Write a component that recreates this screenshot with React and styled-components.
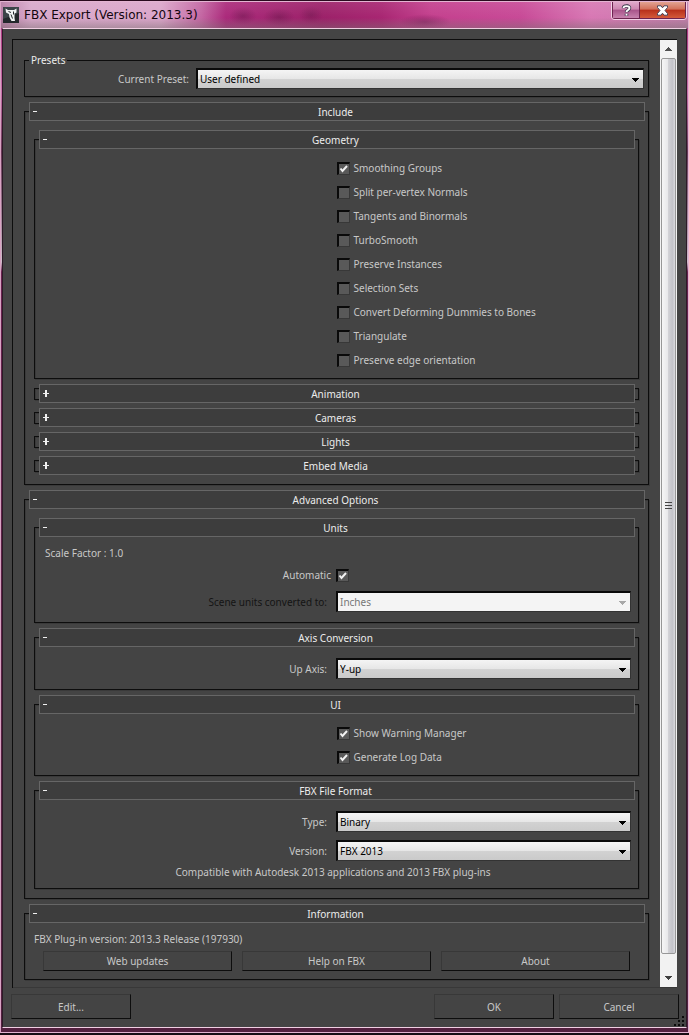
import React, { useState } from 'react';
import styled, { createGlobalStyle, css } from 'styled-components';

const GlobalStyle = createGlobalStyle`
  * { box-sizing: border-box; }
  body {
    margin: 0;
    background: #1a0c16;
    font-family: 'Noto Sans', 'Open Sans', sans-serif;
    font-size: 10px;
    line-height: 14px;
    color: #c8c8c8;
  }
  button, select, input { font: inherit; margin: 0; }
`;

const Window = styled.div`
  min-height: 100vh;
  display: flex;
  flex-direction: column;
  border-top: 1px solid #2a0a1e;
  border-bottom: 2px solid #160d14;
`;

const Frame = styled.div`
  flex: 1;
  display: flex;
  flex-direction: column;
  padding: 0 0 4px;
  border: 1px solid #e3b4d2;
  border-left-color: #d9a3c4;
  background: linear-gradient(180deg, #a0246f 0, #c66fa8 90px, #6a3a58 150px, #cdbcc8 260px, #6b2350 270px, #5a2245 60%, #53203f 100%);
`;

const TitleBar = styled.header`
  height: 26px;
  display: flex;
  align-items: flex-start;
  padding-left: 2px;
  background:
    linear-gradient(180deg, rgba(255, 255, 255, 0.08) 0, rgba(0, 0, 0, 0) 60%, rgba(120, 110, 110, 0.45) 100%),
    radial-gradient(ellipse 14px 9px at 242px 14px, rgba(90, 20, 65, 0.4), transparent),
    radial-gradient(ellipse 16px 9px at 278px 15px, rgba(90, 20, 65, 0.4), transparent),
    radial-gradient(ellipse 12px 9px at 310px 13px, rgba(90, 20, 65, 0.35), transparent),
    radial-gradient(ellipse 26px 8px at 424px 20px, rgba(110, 25, 80, 0.5), transparent),
    linear-gradient(90deg, #b77da4 0, #d9a9cb 30px, #dba6ca 160px, #c467a3 200px, #ab2a7b 225px, #9c2169 320px, #a82672 380px, #c4408e 430px, #c84a97 520px, #d878b4 590px, #c27fab 100%);
`;

const AppIcon = styled.svg`
  width: 16px;
  height: 16px;
  margin-top: 5px;
  flex: none;
`;

const Title = styled.h1`
  flex: 1;
  margin: 0;
  padding-left: 5px;
  font: 12px/27px 'DejaVu Sans', sans-serif;
  color: #12060e;
  white-space: nowrap;
`;

const CaptionButtons = styled.div`
  display: flex;
  height: 18px;
  margin-right: 1px;
  border: 1px solid #f2d3e6;
  border-top: 0;
  border-radius: 0 0 4px 4px;
  overflow: hidden;
`;

const closeFill = 'linear-gradient(180deg, #e2a392 0, #d2705a 45%, #b8301a 50%, #d45a3a 100%)';
const helpFill = 'linear-gradient(180deg, #e0a9cb 0, #cd86b1 45%, #a8548a 50%, #c883ae 100%)';

const CaptionButton = styled.button`
  display: flex;
  align-items: center;
  justify-content: center;
  width: ${(p) => (p.$close ? 47 : 27)}px;
  padding: 0;
  border: 1px solid #6d2450;
  border-top: 0;
  border-right-width: ${(p) => (p.$close ? 1 : 0)}px;
  background: ${(p) => (p.$close ? closeFill : helpFill)};
`;

const Client = styled.main`
  flex: 1;
  display: flex;
  flex-direction: column;
  margin: 0 1px;
  padding: 10px 7px 8px 9px;
  border: 1px solid #f0cfe2;
  border-left-color: #2d1a28;
  border-right-color: #2d1a28;
  background: #444;
`;

const ScrollArea = styled.div`
  flex: 1;
  display: flex;
  border: solid #0d0d0d;
  border-width: 1px 0 0 1px;
  box-shadow: inset 0 -1px 0 #383838;
  margin-right: 2px;
`;

const Content = styled.div`
  flex: 1;
  min-width: 0;
  display: flex;
  flex-direction: column;
  padding: 13px 11px 8px;
`;

const PresetGroup = styled.fieldset`
  min-width: 0;
  margin: 0;
  padding: 1px 4px 7px 0;
  border: 1px solid #0d0d0d;
  box-shadow: 1px 1px 0 #3a3a3a;
`;

const Legend = styled.legend`
  margin-left: 4px;
  padding: 0 2px;
  color: #ececec;
`;

const PresetRow = styled.div`
  display: grid;
  grid-template-columns: 164px 1fr;
  gap: 7px;
  align-items: center;
`;

const SectionBox = styled.section`
  border: 1px solid #0d0d0d;
  box-shadow: 1px 1px 0 #3a3a3a, inset 1px 1px 0 #3a3a3a;
  margin-top: ${(p) => (p.$top ? 14 : 0)}px;

  section + & {
    margin-top: 14px;
  }

  ${(p) => p.$collapsed && css`
    height: 12px;
    margin-bottom: 3px;

    section + & {
      margin-top: 9px;
    }
  `}
`;

const SectionHeader = styled.button`
  display: grid;
  grid-template-columns: 12px 1fr 18px;
  align-items: center;
  width: calc(100% - 7px);
  height: 19px;
  margin: ${(p) => (p.$collapsed ? -5 : -10)}px 3px 0 4px;
  padding: 0 0 0 3px;
  border: 1px solid #666;
  background: #3d3d3d;
  color: #ececec;
  text-align: center;
`;

const Sign = styled.svg`
  width: 6px;
  height: 7px;
  fill: #f0f0f0;
`;

const Nested = styled.div`
  display: flex;
  flex-direction: column;
  padding: 18px 9px 9px;
`;

const Options = styled.div`
  display: flex;
  flex-direction: column;
  padding: 7px 0 6px;
`;

const OptionLabel = styled.label`
  display: flex;
  align-items: center;
  gap: 4px;
  height: 24px;
  padding-left: 50%;
`;

const TickBox = styled.span`
  position: relative;
  width: 13px;
  height: 13px;
  flex: none;
`;

const TickInput = styled.input`
  display: block;
  appearance: none;
  width: 13px;
  height: 13px;
  border: solid #383838;
  border-width: 2px 1px 1px 2px;
  border-top-color: #0a0a0a;
  border-left-color: #0a0a0a;
  background: #595959;
`;

const TickMark = styled.svg`
  position: absolute;
  inset: 0;
  pointer-events: none;
`;

const Form = styled.div`
  display: flex;
  flex-direction: column;
  padding: ${(p) => (p.$lead ? 9 : 11)}px 7px ${(p) => (p.$tail ? 9 : 10)}px 0;
`;

const Field = styled.div`
  display: grid;
  grid-template-columns: calc(50% - 6px) 1fr;
  column-gap: 9px;
  align-items: center;
  margin-top: ${(p) => p.$gap || 0}px;
`;

const FieldLabel = styled.label`
  text-align: right;
  color: ${(p) => (p.$disabled ? '#141414' : '#c8c8c8')};
`;

const Note = styled.p`
  margin: 0;
  padding: ${(p) => (p.$center ? '4px 0 0' : '0 0 0 10px')};
  text-align: ${(p) => (p.$center ? 'center' : 'left')};
`;

const SelectBox = styled.div`
  position: relative;
  height: 21px;
  border: 2px solid #0a0a0a;
  border-right: 1px solid #333;
  border-bottom: 1px solid #333;
`;

const SelectInput = styled.select`
  appearance: none;
  display: block;
  width: 100%;
  height: 18px;
  padding: 0 20px 0 2px;
  border: 0;
  border-radius: 0;
  color: #000;
  background: linear-gradient(180deg, #f4f4f4 0, #e6e6e6 50%, #d2d2d2 51%, #cacaca 100%);

  &:disabled {
    color: #777;
    background: #f4f4f4;
    opacity: 1;
  }
`;

const Arrow = styled.svg`
  position: absolute;
  right: 3px;
  top: 8px;
  width: 8px;
  height: 4px;
  fill: ${(p) => (p.$disabled ? '#a8a8a8' : '#000')};
  pointer-events: none;
`;

const AutomaticRow = styled.div`
  display: grid;
  grid-template-columns: calc(50% - 2px) 1fr;
  column-gap: 5px;
  align-items: center;
  margin: 8px 0 9px;
`;

const PushButton = styled.button`
  height: ${(p) => (p.$tall ? 25 : 20)}px;
  padding: 0;
  border: 1px solid #0d0d0d;
  border-top-color: #383838;
  border-left-color: #383838;
  background: #444;
  color: #c8c8c8;
`;

const InfoBody = styled.div`
  display: flex;
  flex-direction: column;
  padding: 9px 9px 8px;
`;

const InfoButtons = styled.div`
  display: grid;
  grid-template-columns: repeat(3, 1fr);
  gap: 10px;
  padding: 5px 9px 0 9px;
`;

const ScrollBar = styled.div`
  flex: none;
  width: 17px;
  display: flex;
  flex-direction: column;
  margin-bottom: 1px;
  background: #f2f2f2;
`;

const ScrollStep = styled.button`
  height: ${(p) => (p.$down ? 33 : 18)}px;
  display: flex;
  align-items: ${(p) => (p.$down ? 'flex-end' : 'center')};
  justify-content: center;
  padding: ${(p) => (p.$down ? '0 0 7px' : 0)};
  border: 0;
  background: transparent;
`;

const Thumb = styled.div`
  flex: 1;
  display: flex;
  align-items: center;
  justify-content: center;
  margin: 0 1px;
  border: 1px solid #979797;
  border-radius: 2px;
  background: linear-gradient(90deg, #f6f6f6 0, #e8e8ea 45%, #d2d2d6 50%, #c4c4ca 80%, #dadade 100%);
`;

const FooterWrap = styled.div`
  position: relative;
  margin: 0 -7px -8px 0;
  padding: 0 7px 8px 0;
`;

const Footer = styled.footer`
  display: grid;
  grid-template-columns: 120px 1fr 120px 120px;
  gap: 5px;
  margin: 6px 0 0 -1px;
`;

const OkButton = styled(PushButton)`
  grid-column: 3;
`;

const SizeGrip = styled.svg`
  position: absolute;
  right: 0;
  bottom: 0;
  width: 12px;
  height: 12px;
  fill: #0a0a0a;
`;

const geometry = [
  ['Smoothing Groups', true],
  ['Split per-vertex Normals', false],
  ['Tangents and Binormals', false],
  ['TurboSmooth', false],
  ['Preserve Instances', false],
  ['Selection Sets', false],
  ['Convert Deforming Dummies to Bones', false],
  ['Triangulate', false],
  ['Preserve edge orientation', false],
];

const uiOptions = [
  ['Show Warning Manager', true],
  ['Generate Log Data', true],
];

const Tick = ({ id, initial }) => {
  const [on, setOn] = useState(initial);
  return (
    <TickBox>
      <TickInput id={id} type="checkbox" checked={on} onChange={() => setOn(!on)} />
      {on && (
        <TickMark width="13" height="13" viewBox="0 0 13 13">
          <path d="M3.5 6.5 L5.5 9 L10 4" fill="none" stroke="#f2f2f2" strokeWidth="2" />
        </TickMark>
      )}
    </TickBox>
  );
};

const Option = ({ label, checked }) => {
  const id = label.toLowerCase().replace(/ /g, '-');
  return (
    <OptionLabel htmlFor={id}>
      <Tick id={id} initial={checked} />
      {label}
    </OptionLabel>
  );
};

const Select = ({ id, options, disabled }) => (
  <SelectBox>
    <SelectInput id={id} disabled={disabled}>
      {options.map((o) => <option key={o}>{o}</option>)}
    </SelectInput>
    <Arrow $disabled={disabled} viewBox="0 0 8 4"><path d="M0 0h7v1H6v1H5v1H4v1H3V3H2V2H1V1H0z" /></Arrow>
  </SelectBox>
);

const Section = ({ title, top, closed, children }) => {
  const collapsed = Boolean(closed);
  return (
    <SectionBox $top={top} $collapsed={collapsed}>
      <SectionHeader type="button" aria-expanded={!collapsed} $collapsed={collapsed}>
        <Sign viewBox="0 0 6 7">
          {collapsed ? <path d="M0 3h2V0h2v3h2v1H4v3H2V4H0z" /> : <path d="M0 3h4v1H0z" />}
        </Sign>
        <span>{title}</span>
      </SectionHeader>
      {children}
    </SectionBox>
  );
};

const App = () => (
  <>
    <GlobalStyle />
    <Window>
      <Frame>
        <TitleBar>
          <AppIcon viewBox="0 0 16 16">
            <rect width="16" height="16" fill="#23282b" />
            <path d="M0 0h16v6L0 12z" fill="#3c4448" />
            <path d="M2.5 1.500L5 3h6l2.500-1.500L13.500 5.500 11.500 6.500 11.500 11 12 14H8.500L6.500 10.500 6 7 3 5.500z" fill="#f1f4f4" />
            <path d="M5.500 4.500l2.500 1M10.500 4.500v3M8 7.500l1.500 4" stroke="#23282b" strokeWidth="1" fill="none" />
          </AppIcon>
          <Title>FBX Export (Version: 2013.3)</Title>
          <CaptionButtons>
            <CaptionButton type="button" aria-label="Help">
              <svg width="11" height="13" viewBox="0 0 11 13" fill="none">
                <path d="M2.5 4.2C2.5 1.2 8.5 1.2 8.5 4C8.5 6 5.5 5.8 5.5 8.2M5.5 9.8v2" stroke="#4a4558" strokeWidth="3.6" />
                <path d="M2.5 4C2.5 1.4 8.5 1.4 8.5 4C8.5 6 5.5 5.8 5.5 8M5.5 9.8v1.7" stroke="#fff" strokeWidth="1.8" />
              </svg>
            </CaptionButton>
            <CaptionButton type="button" aria-label="Close" $close>
              <svg width="13" height="11" viewBox="0 0 13 11">
                <path d="M1.500 .8h3.500l1.500 2 1.500-2h3.500v1.700L9 5.500l2.500 3v1.700H8l-1.500-2-1.500 2H1.500V8.500L4 5.500l-2.500-3z" fill="#fff" stroke="#4a4558" strokeWidth="1" />
              </svg>
            </CaptionButton>
          </CaptionButtons>
        </TitleBar>

        <Client>
          <ScrollArea>
            <Content>
              <PresetGroup>
                <Legend>Presets</Legend>
                <PresetRow>
                  <FieldLabel htmlFor="preset">Current Preset:</FieldLabel>
                  <Select id="preset" options={['User defined']} />
                </PresetRow>
              </PresetGroup>

              <Section title="Include" top>
                <Nested>
                  <Section title="Geometry">
                    <Options>
                      {geometry.map(([label, checked]) => <Option key={label} label={label} checked={checked} />)}
                    </Options>
                  </Section>
                  <Section title="Animation" closed />
                  <Section title="Cameras" closed />
                  <Section title="Lights" closed />
                  <Section title="Embed Media" closed />
                </Nested>
              </Section>

              <Section title="Advanced Options" top>
                <Nested>
                  <Section title="Units">
                    <Form $lead>
                      <Note>Scale Factor : 1.0</Note>
                      <AutomaticRow>
                        <FieldLabel htmlFor="automatic">Automatic</FieldLabel>
                        <Tick id="automatic" initial />
                      </AutomaticRow>
                      <Field>
                        <FieldLabel htmlFor="scene-units" $disabled>Scene units converted to:</FieldLabel>
                        <Select id="scene-units" options={['Inches']} disabled />
                      </Field>
                    </Form>
                  </Section>
                  <Section title="Axis Conversion">
                    <Form>
                      <Field>
                        <FieldLabel htmlFor="up-axis">Up Axis:</FieldLabel>
                        <Select id="up-axis" options={['Y-up', 'Z-up']} />
                      </Field>
                    </Form>
                  </Section>
                  <Section title="UI">
                    <Options>
                      {uiOptions.map(([label, checked]) => <Option key={label} label={label} checked={checked} />)}
                    </Options>
                  </Section>
                  <Section title="FBX File Format">
                    <Form $tail>
                      <Field>
                        <FieldLabel htmlFor="file-type">Type:</FieldLabel>
                        <Select id="file-type" options={['Binary', 'ASCII']} />
                      </Field>
                      <Field $gap={8}>
                        <FieldLabel htmlFor="file-version">Version:</FieldLabel>
                        <Select id="file-version" options={['FBX 2013', 'FBX 2012']} />
                      </Field>
                      <Note $center>Compatible with Autodesk 2013 applications and 2013 FBX plug-ins</Note>
                    </Form>
                  </Section>
                </Nested>
              </Section>

              <Section title="Information" top>
                <InfoBody>
                  <span>FBX Plug-in version: 2013.3 Release (197930)</span>
                  <InfoButtons>
                    <PushButton type="button">Web updates</PushButton>
                    <PushButton type="button">Help on FBX</PushButton>
                    <PushButton type="button">About</PushButton>
                  </InfoButtons>
                </InfoBody>
              </Section>
            </Content>

            <ScrollBar>
              <ScrollStep type="button" aria-label="Scroll up">
                <svg width="7" height="4" viewBox="0 0 7 4"><path d="M3 0h1v1h1v1h1v1h1v1H0V3h1V2h1V1h1z" fill="#505050" /></svg>
              </ScrollStep>
              <Thumb>
                <svg width="7" height="8" viewBox="0 0 7 8"><path d="M0 .5h7M0 3.5h7M0 6.5h7" stroke="#444" /></svg>
              </Thumb>
              <ScrollStep type="button" aria-label="Scroll down" $down>
                <svg width="7" height="4" viewBox="0 0 7 4"><path d="M0 0h7v1H6v1H5v1H4v1H3V3H2V2H1V1H0z" fill="#404040" /></svg>
              </ScrollStep>
            </ScrollBar>
          </ScrollArea>

          <FooterWrap>
            <Footer>
              <PushButton type="button" $tall>Edit...</PushButton>
              <OkButton type="button" $tall>OK</OkButton>
              <PushButton type="button" $tall>Cancel</PushButton>
            </Footer>
            <SizeGrip viewBox="0 0 12 12">
              <path d="M8 1h2v2H8zM8 5h2v2H8zM4 5h2v2H4zM8 9h2v2H8zM4 9h2v2H4zM0 9h2v2H0z" />
            </SizeGrip>
          </FooterWrap>
        </Client>
      </Frame>
    </Window>
  </>
);

export default App;
